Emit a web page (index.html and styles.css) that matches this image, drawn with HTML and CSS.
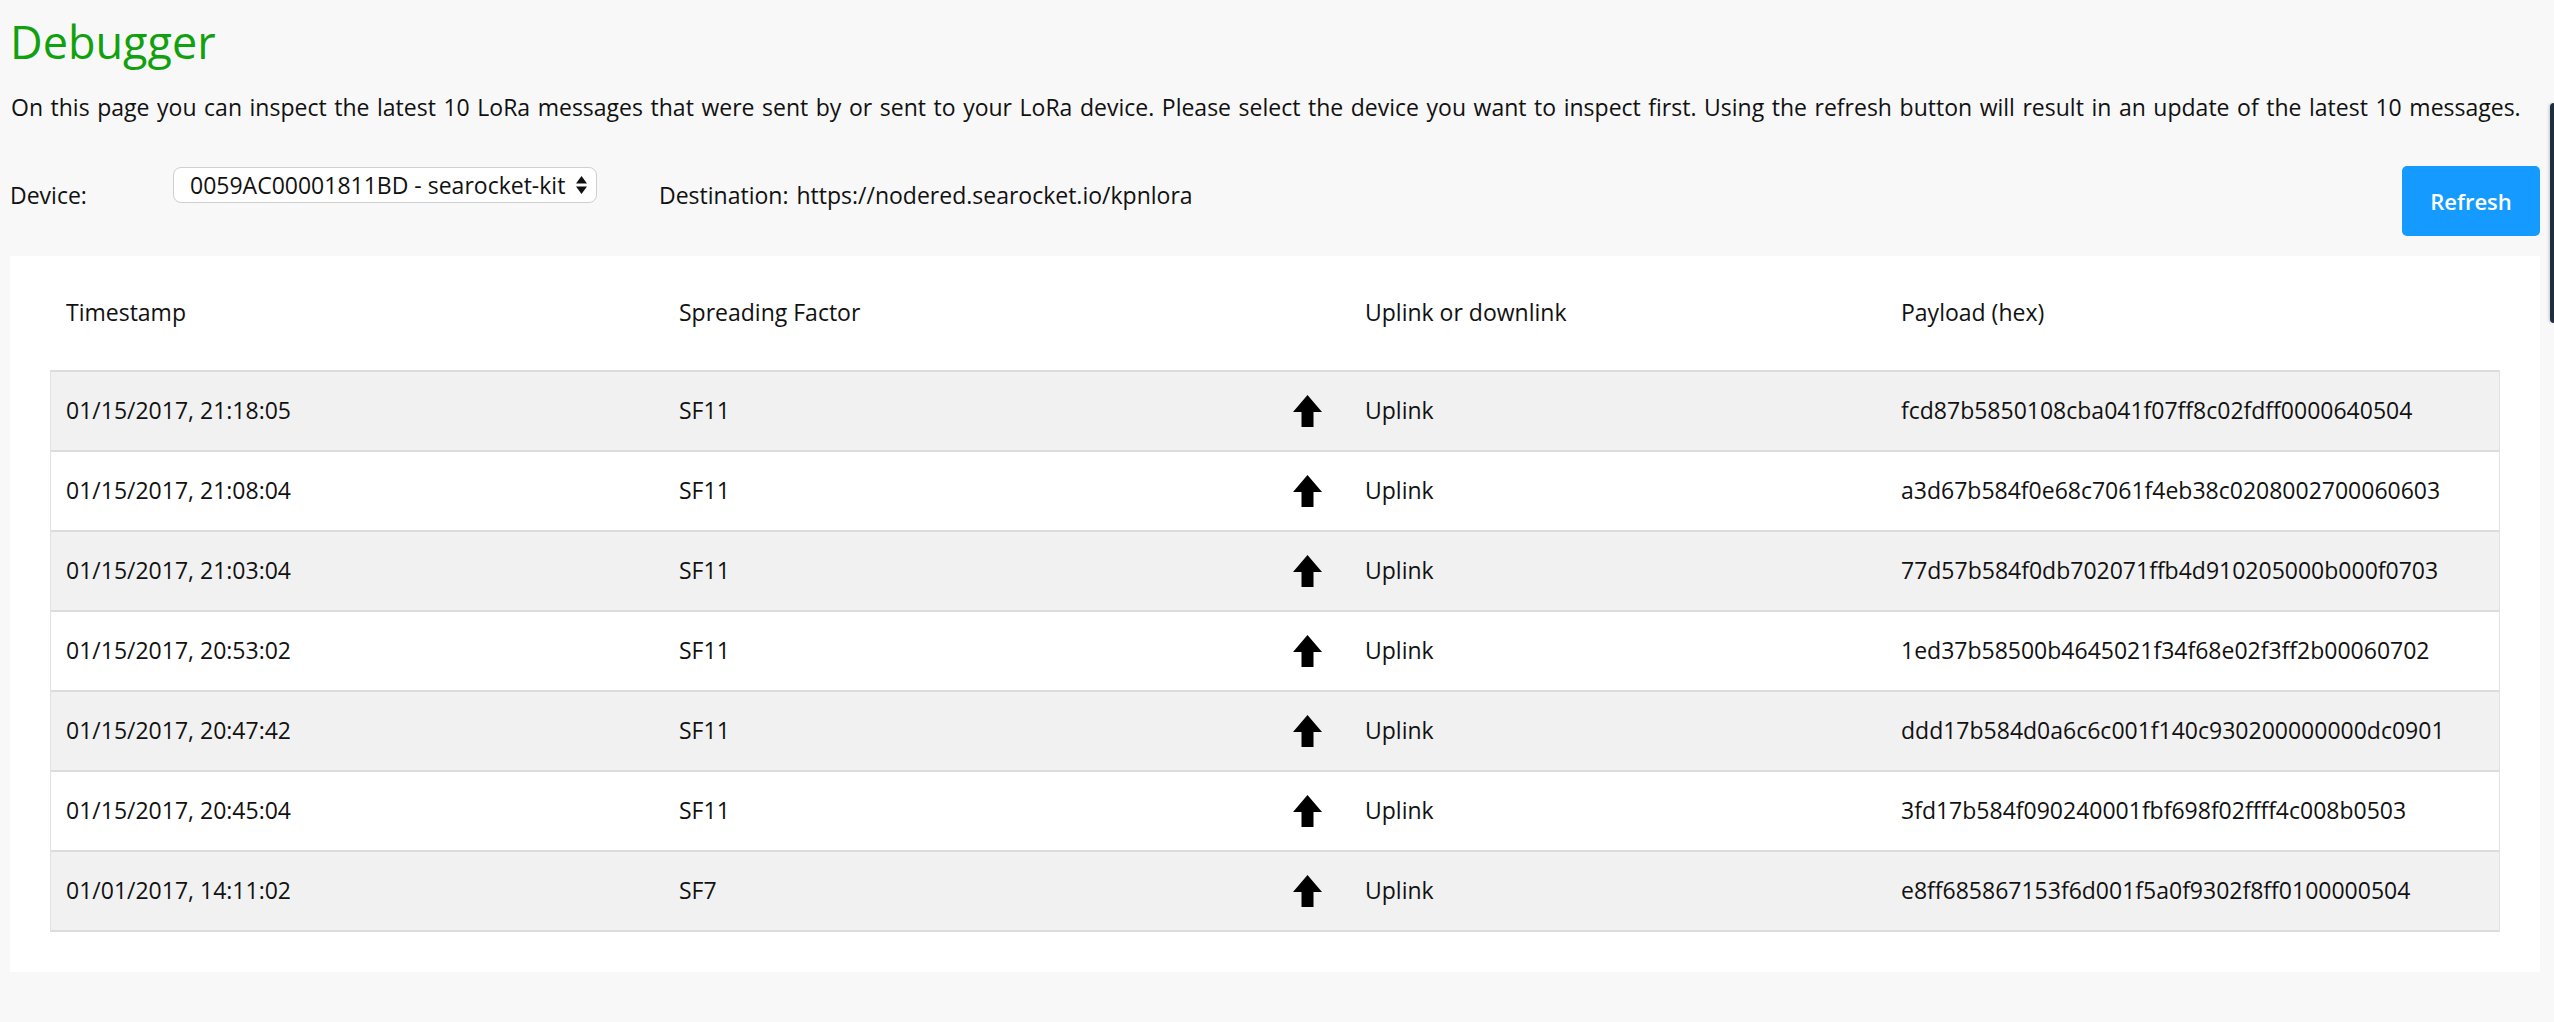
FILE: index.html
```html
<!DOCTYPE html>
<html lang="en">
<head>
<meta charset="utf-8">
<title>Debugger</title>
<link rel="stylesheet" href="styles.css">
</head>
<body>
<div class="page">
  <h1 class="title">Debugger</h1>
  <p class="intro">On this page you can inspect the latest 10 LoRa messages that were sent by or sent to your LoRa device. Please select the device you want to inspect first. Using the refresh button will result in an update of the latest 10 messages.</p>

  <div class="toolbar">
    <span class="label label-device">Device:</span>
    <div class="select">
      <span class="select-text">0059AC00001811BD - searocket-kit</span>
      <svg class="updown" width="11" height="18" viewBox="0 0 11 18"><path d="M5.5 0 L11 7.5 H0 Z M5.5 18 L11 10.5 H0 Z" fill="#111"/></svg>
    </div>
    <span class="label label-dest">Destination:</span>
    <span class="label label-url">https://nodered.searocket.io/kpnlora</span>
    <button class="refresh">Refresh</button>
  </div>

  <section class="card">
    <div class="grid thead">
      <div class="cell">Timestamp</div>
      <div class="cell">Spreading Factor</div>
      <div class="cell icon-cell"></div>
      <div class="cell">Uplink or downlink</div>
      <div class="cell">Payload (hex)</div>
    </div>
    <div class="tbody">
      <div class="grid row shade">
        <div class="cell">01/15/2017, 21:18:05</div>
        <div class="cell">SF11</div>
        <div class="cell icon-cell"><svg class="arrow" width="29" height="32" viewBox="0 0 29 32"><path d="M14.5 0 L29 17 H20.5 V32 H8.5 V17 H0 Z" fill="#000"/></svg></div>
        <div class="cell">Uplink</div>
        <div class="cell">fcd87b5850108cba041f07ff8c02fdff0000640504</div>
      </div>
      <div class="grid row">
        <div class="cell">01/15/2017, 21:08:04</div>
        <div class="cell">SF11</div>
        <div class="cell icon-cell"><svg class="arrow" width="29" height="32" viewBox="0 0 29 32"><path d="M14.5 0 L29 17 H20.5 V32 H8.5 V17 H0 Z" fill="#000"/></svg></div>
        <div class="cell">Uplink</div>
        <div class="cell">a3d67b584f0e68c7061f4eb38c0208002700060603</div>
      </div>
      <div class="grid row shade">
        <div class="cell">01/15/2017, 21:03:04</div>
        <div class="cell">SF11</div>
        <div class="cell icon-cell"><svg class="arrow" width="29" height="32" viewBox="0 0 29 32"><path d="M14.5 0 L29 17 H20.5 V32 H8.5 V17 H0 Z" fill="#000"/></svg></div>
        <div class="cell">Uplink</div>
        <div class="cell">77d57b584f0db702071ffb4d910205000b000f0703</div>
      </div>
      <div class="grid row">
        <div class="cell">01/15/2017, 20:53:02</div>
        <div class="cell">SF11</div>
        <div class="cell icon-cell"><svg class="arrow" width="29" height="32" viewBox="0 0 29 32"><path d="M14.5 0 L29 17 H20.5 V32 H8.5 V17 H0 Z" fill="#000"/></svg></div>
        <div class="cell">Uplink</div>
        <div class="cell">1ed37b58500b4645021f34f68e02f3ff2b00060702</div>
      </div>
      <div class="grid row shade">
        <div class="cell">01/15/2017, 20:47:42</div>
        <div class="cell">SF11</div>
        <div class="cell icon-cell"><svg class="arrow" width="29" height="32" viewBox="0 0 29 32"><path d="M14.5 0 L29 17 H20.5 V32 H8.5 V17 H0 Z" fill="#000"/></svg></div>
        <div class="cell">Uplink</div>
        <div class="cell">ddd17b584d0a6c6c001f140c930200000000dc0901</div>
      </div>
      <div class="grid row">
        <div class="cell">01/15/2017, 20:45:04</div>
        <div class="cell">SF11</div>
        <div class="cell icon-cell"><svg class="arrow" width="29" height="32" viewBox="0 0 29 32"><path d="M14.5 0 L29 17 H20.5 V32 H8.5 V17 H0 Z" fill="#000"/></svg></div>
        <div class="cell">Uplink</div>
        <div class="cell">3fd17b584f090240001fbf698f02ffff4c008b0503</div>
      </div>
      <div class="grid row shade">
        <div class="cell">01/01/2017, 14:11:02</div>
        <div class="cell">SF7</div>
        <div class="cell icon-cell"><svg class="arrow" width="29" height="32" viewBox="0 0 29 32"><path d="M14.5 0 L29 17 H20.5 V32 H8.5 V17 H0 Z" fill="#000"/></svg></div>
        <div class="cell">Uplink</div>
        <div class="cell">e8ff685867153f6d001f5a0f9302f8ff0100000504</div>
      </div>
    </div>
  </section>
</div>
<div class="side-tab"></div>
</body>
</html>
```

FILE: styles.css
```css
html, body {
  margin: 0;
  padding: 0;
  background: #f8f8f8;
}

body {
  font-family: "Open Sans", "Noto Sans", "Liberation Sans", sans-serif;
  font-size: 23px;
  line-height: 1.5;
  color: #111;
  min-height: 1022px;
}

.page {
  padding: 15px 14px 50px 10px;
}

.title {
  margin: 0;
  font-size: 45px;
  line-height: 53px;
  font-weight: 400;
  color: #12a10e;
}

.intro {
  margin: 22px 0 0 1px;
  font-size: 23px;
  line-height: 34.5px;
  word-spacing: 1.6px;
  white-space: nowrap;
}

.toolbar {
  display: flex;
  align-items: flex-start;
  height: 70px;
  margin-top: 41px;
}

.label {
  margin-top: 12px;
  line-height: 34.5px;
  white-space: nowrap;
}

.label-device {
  width: 163px;
}

.select {
  display: flex;
  align-items: center;
  justify-content: space-between;
  box-sizing: border-box;
  width: 424px;
  height: 36px;
  margin-top: 1px;
  padding: 0 9px 0 16px;
  background: #fff;
  border: 1px solid #cfcfcf;
  border-radius: 8px;
  line-height: 34px;
  white-space: nowrap;
}

.updown {
  display: block;
  flex: none;
}

.label-dest {
  margin-left: 62px;
}

.label-url {
  margin-left: 8px;
}

.refresh {
  margin-left: auto;
  width: 138px;
  height: 70px;
  border: none;
  border-radius: 5px;
  background: #159bff;
  color: #fff;
  font-family: "Open Sans", "Noto Sans", "Liberation Sans", sans-serif;
  font-size: 22px;
  font-weight: 600;
  padding: 0;
}

.card {
  margin-top: 20px;
  background: #fff;
  padding: 38px 40px 40px;
}

.grid {
  display: grid;
  grid-template-columns: 613px 629px 57px 536px 613px;
  align-items: center;
}

.thead {
  height: 36px;
  line-height: 36px;
  margin-bottom: 40px;
  padding: 0 1px;
}

.cell {
  padding-left: 15px;
  white-space: nowrap;
}

.icon-cell {
  padding-left: 0;
  display: flex;
  align-items: center;
}

.arrow {
  display: block;
}

.tbody {
  border-left: 1px solid #e2e2e2;
  border-right: 1px solid #e2e2e2;
  border-bottom: 2px solid #dcdcdc;
}

.row {
  height: 78px;
  border-top: 2px solid #dcdcdc;
  background: #fff;
}

.row.shade {
  background: #f1f1f1;
}

.side-tab {
  position: absolute;
  top: 103px;
  right: 0;
  width: 4px;
  height: 220px;
  background: #1e2d40;
  border-radius: 6px 0 0 6px;
  box-shadow: -1px 0 3px rgba(0, 0, 0, 0.2);
}
```
